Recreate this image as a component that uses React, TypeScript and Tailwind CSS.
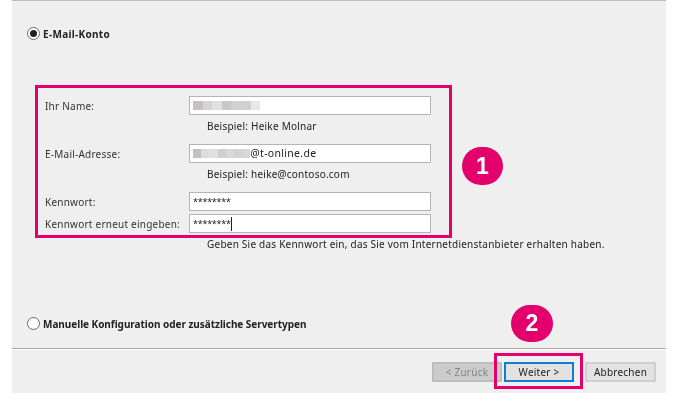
import React from "react";

function Radio({ checked }: { checked?: boolean }) {
  return (
    <span className="flex h-[13px] w-[13px] shrink-0 items-center justify-center rounded-full border border-[#6b6b6b] bg-white">
      {checked && <span className="h-[7px] w-[7px] rounded-full bg-[#222222]" />}
    </span>
  );
}

function Smudge({ colors, width }: { colors: string[]; width: number }) {
  return (
    <span className="flex h-[9px] blur-[0.6px]">
      {colors.map((c, i) => (
        <span key={i} className="h-full" style={{ backgroundColor: c, width }} />
      ))}
    </span>
  );
}

function Field({ children }: { children: React.ReactNode }) {
  return (
    <div className="flex h-[19px] w-[242px] items-center border border-[#b4b4b8] bg-white pl-[3px] text-[10.5px] leading-none text-[#222222]">
      {children}
    </div>
  );
}

function Label({ children }: { children: React.ReactNode }) {
  return <div className="w-[144px] shrink-0 text-[#333333]">{children}</div>;
}

export default function App() {
  return (
    <div className="h-[404px] w-[679px] overflow-hidden bg-white pl-[12px] font-['Noto_Sans',sans-serif] text-[10px] leading-none tracking-[0.23px] text-[#222222]">
      <div className="relative flex h-[393px] w-[654px] flex-col border-t border-[#bcbcbc] bg-[#efefef] blur-[0.25px]">
        <div className="ml-[15px] mt-[26px] flex items-center gap-[3px] font-bold tracking-[0.3px]">
          <Radio checked />
          <span>E-Mail-Konto</span>
        </div>

        <div className="ml-[23px] mt-[45px] flex h-[153px] w-[417px] flex-col border-[3px] border-[#e3006d] pl-[7px] pt-[8px]">
          <div className="flex items-center">
            <Label>Ihr Name:</Label>
            <Field>
              <Smudge width={9.6} colors={["#c4c0c6", "#d5d3d6", "#e0e0e2", "#c9c6c9", "#d2d0d2", "#d0d0d0", "#e8e8e8"]} />
            </Field>
          </div>
          <div className="ml-[162px] mt-[6px] h-[10px]">Beispiel: Heike Molnar</div>
          <div className="mt-[13px] flex items-center">
            <Label>E-Mail-Adresse:</Label>
            <Field>
              <Smudge width={8.2} colors={["#c4bec6", "#dcdcdc", "#e2dfe2", "#d4ced2", "#d8d8d8", "#d2d4d4", "#d8d6d8"]} />
              <span className="tracking-[0.3px]">@t-online.de</span>
            </Field>
          </div>
          <div className="ml-[162px] mt-[6px] h-[10px]">Beispiel: heike@contoso.com</div>
          <div className="mt-[13px] flex items-center">
            <Label>Kennwort:</Label>
            <Field>
              <span className="text-[9px] tracking-[-0.25px]">********</span>
            </Field>
          </div>
          <div className="mt-[3px] flex items-center">
            <Label>Kennwort erneut eingeben:</Label>
            <Field>
              <span className="text-[9px] tracking-[-0.25px]">********</span>
              <span className="h-[14px] w-px bg-[#222222]" />
            </Field>
          </div>
        </div>

        <div className="ml-[195px] mt-[1px]">
          Geben Sie das Kennwort ein, das Sie vom Internetdienstanbieter erhalten haben.
        </div>

        <div className="ml-[15px] mt-[68px] flex items-center gap-[3px] font-bold tracking-[-0.04px]">
          <Radio />
          <span>Manuelle Konfiguration oder zusätzliche Servertypen</span>
        </div>

        <div className="mt-auto flex h-[45px] items-start justify-end border-t border-[#a8a8a8] pt-[13px] pr-[10px] shadow-[inset_0_1px_0_#ffffff]">
          <button className="flex h-[20px] w-[70px] items-center justify-center border-2 border-[#bdbdbd] bg-[#cccccc] text-[#858585]">
            &lt; Zurück
          </button>
          <div className="relative ml-[2px]">
            <button className="flex h-[20px] w-[70px] items-center justify-center border-2 border-[#0c7fd2] bg-[#e2e2e2]">
              Weiter &gt;
            </button>
            <div className="absolute -left-[10px] -right-[9px] -top-[9px] -bottom-[7px] border-[3px] border-[#e3006d]" />
          </div>
          <button className="ml-[11px] flex h-[20px] w-[71px] items-center justify-center border-2 border-[#cfcfcf] bg-[#e2e2e2]">
            Abbrechen
          </button>
        </div>

        <div className="absolute left-[450px] top-[146px] flex h-[38px] w-[41px] items-center justify-center rounded-full bg-[#e3006d] font-['Liberation_Sans',sans-serif] text-[23px] font-bold text-white">
          1
        </div>
        <div className="absolute left-[499px] top-[304px] flex h-[37px] w-[42px] items-center justify-center rounded-full bg-[#e3006d] font-['Liberation_Sans',sans-serif] text-[23px] font-bold text-white">
          2
        </div>
      </div>
    </div>
  );
}
